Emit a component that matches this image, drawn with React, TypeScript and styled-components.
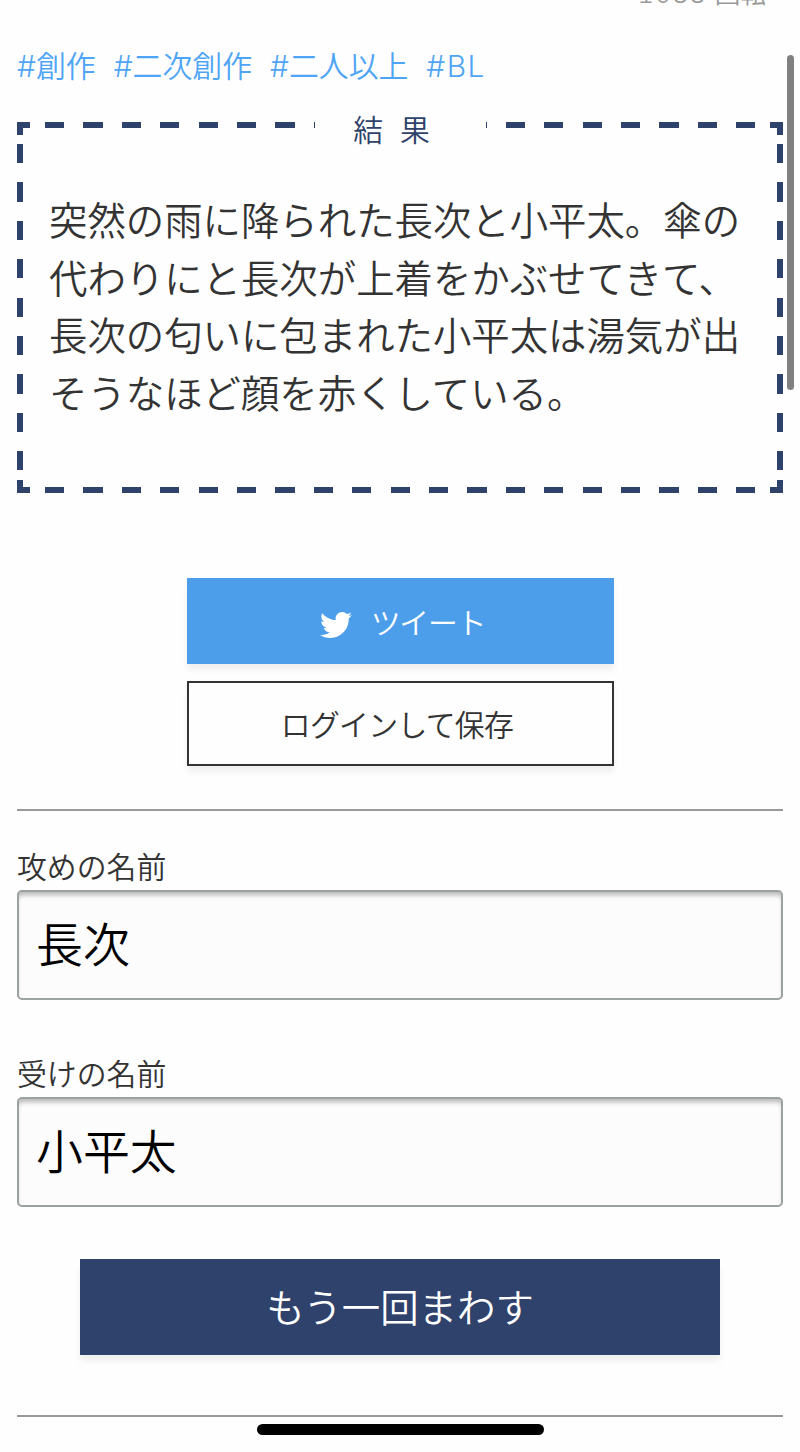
import React from 'react';
import styled, { createGlobalStyle } from 'styled-components';
import { FaTwitter } from 'react-icons/fa';

const navy = '#2f426b';
const fill = `linear-gradient(${navy}, ${navy})`;
const dash = (angle: string) =>
  `repeating-linear-gradient(${angle}, ${navy} 0 19.2px, transparent 19.2px 38.4px)`;

const GlobalStyle = createGlobalStyle`
  * { box-sizing: border-box; }
  body {
    margin: 0;
    background: #fefefe;
    color: #333;
    font-family: 'Inter', 'Noto Sans CJK JP', sans-serif;
    font-weight: 350;
  }
`;

const Page = styled.main`
  position: relative;
  height: 1452px;
  overflow: hidden;
  padding: 0 17px;
  display: flex;
  flex-direction: column;
`;

const SpinCount = styled.div`
  height: 45px;
  padding-right: 17px;
  text-align: right;
  font-size: 25.6px;
  line-height: 40px;
  color: #999;
`;

const SpinText = styled.div`
  margin-top: -26px;
`;

const Digits = styled.span`
  margin-right: 1px;
  font-variant-numeric: tabular-nums;
  letter-spacing: 0.7px;
`;

const Tags = styled.nav`
  display: flex;
  gap: 18px;
  height: 77px;
  font-size: 29.87px;
  line-height: 43px;
  white-space: nowrap;
`;

const Tag = styled.a<{ $latin: boolean }>`
  color: #4fa5f5;
  letter-spacing: ${p => (p.$latin ? 1.4 : 0)}px;
`;

const Result = styled.section`
  height: 371px;
  padding: 0 32px;
  background-image:
    ${fill}, ${fill}, ${fill}, ${fill},
    ${fill}, ${fill}, ${fill}, ${fill},
    ${dash('90deg')}, ${dash('90deg')}, ${dash('180deg')}, ${dash('180deg')};
  background-repeat: no-repeat;
  background-position:
    0 0, 100% 0, 0 100%, 100% 100%,
    0 0, 100% 0, 0 100%, 100% 100%,
    50% 0, 50% 100%, 0 50%, 100% 50%;
  background-size:
    13px 6.4px, 13px 6.4px, 13px 6.4px, 13px 6.4px,
    6.4px 13px, 6.4px 13px, 6.4px 13px, 6.4px 13px,
    710.4px 6.4px, 710.4px 6.4px, 6.4px 326.4px, 6.4px 326.4px;
`;

const ResultTitle = styled.h2`
  width: 171px;
  height: 44px;
  margin: -14px auto 41px;
  background: #fefefe;
  color: ${navy};
  font-size: 29.87px;
  font-weight: 350;
  line-height: 44px;
  letter-spacing: 17px;
  text-align: center;
`;

const ResultText = styled.p`
  margin: 0;
  font-size: 38.4px;
  line-height: 57.6px;
  white-space: nowrap;
`;

const Actions = styled.div`
  display: flex;
  flex-direction: column;
  align-items: center;
  gap: 17px;
  margin: 85px 0 43px;
`;

const Button = styled.button<{ $kind: 'tweet' | 'outline' | 'primary' }>`
  display: flex;
  align-items: center;
  justify-content: center;
  gap: 19px;
  flex: none;
  width: ${p => (p.$kind === 'primary' ? 640 : 427)}px;
  height: ${p => ({ tweet: 86, outline: 85, primary: 96 })[p.$kind]}px;
  padding: ${p => ({ tweet: '0 0 1px 5px', outline: '0 6px 2px 0', primary: '0 0 5px' })[p.$kind]};
  border: ${p => (p.$kind === 'outline' ? '2px solid #333' : '0')};
  background: ${p => ({ tweet: '#4c9eeb', outline: '#fefefe', primary: navy })[p.$kind]};
  color: ${p => (p.$kind === 'outline' ? '#333' : '#fff')};
  box-shadow: 0 6px 6px rgba(0, 0, 0, 0.06);
  font: inherit;
  font-size: ${p => (p.$kind === 'primary' ? 38.4 : 29.87)}px;
  letter-spacing: ${p => ({ tweet: -1.2, outline: -0.7, primary: 0 })[p.$kind]}px;
  svg { margin-top: 8px; }
`;

const Rule = styled.hr`
  flex: none;
  width: 100%;
  height: 2px;
  margin: 0;
  border: 0;
  background: #999;
`;

const Field = styled.label`
  display: flex;
  flex-direction: column;
  height: 207px;
  font-size: 29.87px;
  line-height: 43px;
`;

const Input = styled.input`
  width: 100%;
  height: 110px;
  margin-top: 1px;
  padding: 0 17px 6px;
  border: 2px solid #9aa3a1;
  border-radius: 5px;
  background: #fcfcfc;
  box-shadow: inset 0 5px 5px -2px rgba(0, 0, 0, 0.28);
  color: #000;
  font: inherit;
  font-size: 46.93px;
  line-height: 68px;
  outline: none;
`;

const Form = styled.form`
  display: flex;
  flex-direction: column;
  align-items: center;
  padding-top: 35px;
  margin-bottom: 60px;
  ${Field} { width: 100%; }
  ${Button} { margin-top: -1px; }
`;

const Scrollbar = styled.div`
  position: absolute;
  top: 55px;
  right: 6px;
  width: 7px;
  height: 335px;
  border-radius: 4px;
  background: #808080;
`;

const HomeIndicator = styled.div`
  position: absolute;
  left: 257px;
  top: 1424px;
  width: 287px;
  height: 11px;
  border-radius: 6px;
  background: #000;
`;

export default function App() {
  return (
    <Page>
      <GlobalStyle />
      <SpinCount>
        <SpinText><Digits>1088</Digits> 回転</SpinText>
      </SpinCount>
      <Tags>
        {['#創作', '#二次創作', '#二人以上', '#BL'].map(tag => (
          <Tag key={tag} $latin={tag === '#BL'}>{tag}</Tag>
        ))}
      </Tags>
      <Result>
        <ResultTitle>結果</ResultTitle>
        <ResultText>
          突然の雨に降られた長次と小平太。傘の<br />
          代わりにと長次が上着をかぶせてきて、<br />
          長次の匂いに包まれた小平太は湯気が出<br />
          そうなほど顔を赤くしている。
        </ResultText>
      </Result>
      <Actions>
        <Button $kind="tweet"><FaTwitter size={32} />ツイート</Button>
        <Button $kind="outline">ログインして保存</Button>
      </Actions>
      <Rule />
      <Form onSubmit={e => e.preventDefault()}>
        <Field>攻めの名前<Input defaultValue="長次" /></Field>
        <Field>受けの名前<Input defaultValue="小平太" /></Field>
        <Button $kind="primary" type="submit">もう一回まわす</Button>
      </Form>
      <Rule />
      <Scrollbar />
      <HomeIndicator />
    </Page>
  );
}
